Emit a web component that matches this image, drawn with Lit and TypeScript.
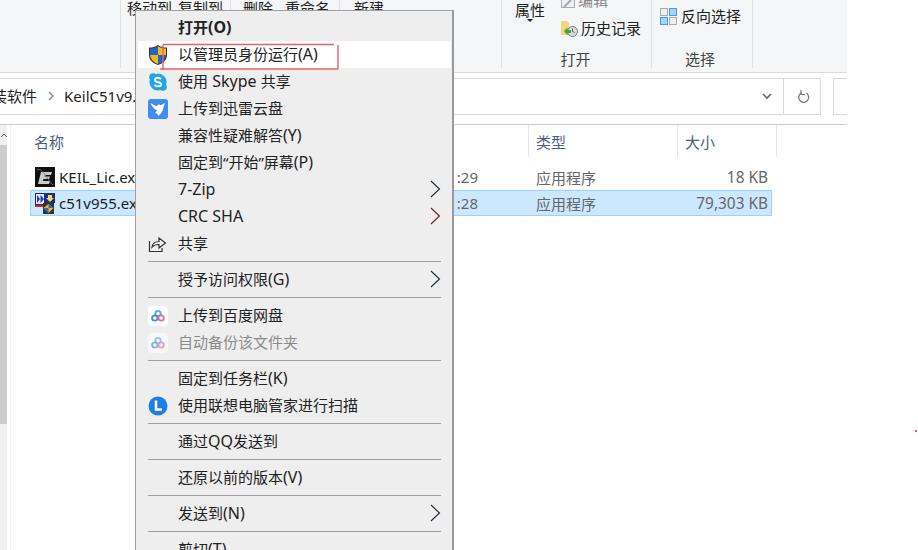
import { LitElement, html, css, TemplateResult } from "lit";
import { customElement } from "lit/decorators.js";

const arrow = (color: string) => html`<svg width="11" height="18" viewBox="0 0 11 18"><path d="M1 1l8.500 8L1 17" fill="none" stroke="${color}" stroke-width="1.1"/></svg>`;

const shield = html`<svg width="20" height="22" viewBox="0 0 20 22">
  <path d="M10 1C7.500 3 4.500 3.500 1 3.500V11c0 5 4 8.500 9 10 5-1.500 9-5 9-10V3.500C15.500 3.500 12.500 3 10 1z" fill="#333"/>
  <path d="M10 2.200V11H2V4.500c3 0 5.500-.6 8-2.300z" fill="#1d68c4"/>
  <path d="M10 2.200V11h8V4.500c-3 0-5.500-.6-8-2.300z" fill="#f6b91d"/>
  <path d="M2 11h8v9C6 18.700 2.500 15.500 2 11z" fill="#f6b91d"/>
  <path d="M18 11h-8v9c4-1.300 7.500-4.500 8-9z" fill="#1d68c4"/>
</svg>`;

const skype = html`<svg width="20" height="20" viewBox="0 0 20 20">
  <circle cx="10" cy="10" r="8.600" fill="#1fa6e6"/><circle cx="5" cy="5" r="3.800" fill="#1fa6e6"/><circle cx="15" cy="15" r="3.800" fill="#1fa6e6"/>
  <path d="M13 7.200C12.400 6.200 11.200 5.800 10 5.800c-1.700 0-3 .9-3 2.200 0 3 6.200 1.600 6.200 4.300 0 1.300-1.400 2.100-3.100 2.100-1.500 0-2.800-.6-3.400-1.800" fill="none" stroke="#fff" stroke-width="1.900"/>
</svg>`;

const xunlei = html`<svg width="20" height="20" viewBox="0 0 20 20">
  <rect width="20" height="20" rx="3" fill="#3f8cf5"/>
  <path d="M2.500 4l5.800 3.200 2.700-2 1.500 1L17 4l-1.500 4c-.3 4-2.700 7-5 9-.5-1.500-1.500-2.700-3.500-3.300l2.300-2.200C6.500 10.500 4 8 2.500 4z" fill="#fff"/>
</svg>`;

const share = html`<svg width="19" height="18" viewBox="0 0 19 18">
  <path d="M1.500 6v10.500h12.500V13" fill="none" stroke="#333" stroke-width="1.200"/>
  <path d="M4 12c.5-3.500 3-5.500 7-5.500V3l6.500 5-6.500 5V9.500c-3 0-5.500.8-7 2.500z" fill="none" stroke="#333" stroke-width="1.200"/>
</svg>`;

const baidu = html`<svg width="20" height="20" viewBox="0 0 20 20">
  <rect width="20" height="20" rx="4" fill="#fff"/>
  <circle cx="10" cy="7.500" r="2.700" fill="none" stroke="#4aa8e8" stroke-width="1.800"/>
  <circle cx="6.800" cy="12" r="2.700" fill="none" stroke="#3f8fdc" stroke-width="1.800"/>
  <circle cx="13.200" cy="12" r="2.700" fill="none" stroke="#e66f9a" stroke-width="1.800"/>
</svg>`;

const lenovo = html`<svg width="20" height="20" viewBox="0 0 20 20">
  <circle cx="10" cy="10" r="9.500" fill="#1c7fe6"/>
  <path d="M8 4.500v9h6" fill="none" stroke="#fff" stroke-width="2.600"/>
</svg>`;

const keilIcon = html`<svg width="20" height="20" viewBox="0 0 20 20">
  <rect width="20" height="20" fill="#111"/>
  <path d="M6 5h11l-1 3H10l-.5 1.500H15L14 12H8.500L8 14h7l-1 3H3z" fill="#ccc"/>
  <path d="M2 3c5-3 9 8 16 15" fill="none" stroke="#777" stroke-width="1"/>
</svg>`;

const c51Icon = html`<svg width="20" height="21" viewBox="0 0 20 21">
  <rect width="10" height="12" fill="#1a2a90"/>
  <rect x="1" y="1" width="8" height="10" fill="#dfe8ff"/>
  <path d="M2 2v8l3-4zM5.500 2v8L9 6z" fill="#2a3ab0"/>
  <rect y="12" width="9" height="2" fill="#e02020"/>
  <rect x="10" width="10" height="10" fill="#1a2a90"/>
  <path d="M13 2h4v3h2l-4 4-4-4h2z" fill="#f4e04a"/>
  <rect x="8" y="10" width="11" height="11" fill="#333"/>
  <path d="M13.500 11l5 4-5 5-5-5z" fill="#f0b820"/>
  <path d="M13.500 11v4h5zM13.500 20v-5h-5z" fill="#2b66c0"/>
</svg>`;

const historyIcon = html`<svg width="17" height="17" viewBox="0 0 17 17">
  <path d="M0 1h6l2 2v12H0z" fill="#f6d67a"/>
  <circle cx="11.500" cy="11.500" r="5" fill="#ddd" stroke="#777"/>
  <path d="M11.500 8.500v3l2 1" fill="none" stroke="#555"/>
  <path d="M3 11l3.500-3.500V10H10v3H6.500v2.500z" fill="#3da53d"/>
</svg>`;

const invertIcon = html`<svg width="17" height="17" viewBox="0 0 17 17">
  <rect x="0.500" y="0.500" width="7" height="7" fill="#eee" stroke="#aaa"/>
  <rect x="9.500" y="0.500" width="7" height="7" fill="#a6d4fa" stroke="#3d9bf0"/>
  <rect x="0.500" y="9.500" width="7" height="7" fill="#a6d4fa" stroke="#3d9bf0"/>
  <rect x="9.500" y="9.500" width="7" height="7" fill="#eee" stroke="#aaa"/>
</svg>`;

const editIcon = html`<svg width="14" height="8" viewBox="0 0 14 8">
  <rect x="0.500" y="-6" width="13" height="13.500" fill="#f0f0f0" stroke="#aab"/>
  <path d="M3 7L10 0" stroke="#9ab" stroke-width="2"/>
</svg>`;

/** Latin runs sit slightly larger than CJK text in the reference's UI font. */
const mixed = (text: string) =>
  text.split(/([\x20-\x7e]+)/).map((part, i) => (i % 2 ? html`<span class="lat">${part}</span>` : part));

interface Row { label?: string; icon?: TemplateResult; bold?: boolean; disabled?: boolean; hot?: boolean; sub?: string; sep?: boolean; }

const ROWS: Row[] = [
  { label: "打开(O)", bold: true },
  { label: "以管理员身份运行(A)", icon: shield, hot: true },
  { label: "使用 Skype 共享", icon: skype },
  { label: "上传到迅雷云盘", icon: xunlei },
  { label: "兼容性疑难解答(Y)" },
  { label: "固定到“开始”屏幕(P)" },
  { label: "7-Zip", sub: "#1a2a3a" },
  { label: "CRC SHA", sub: "#7a1a1a" },
  { label: "共享", icon: share },
  { sep: true },
  { label: "授予访问权限(G)", sub: "#1a2a3a" },
  { sep: true },
  { label: "上传到百度网盘", icon: baidu },
  { label: "自动备份该文件夹", icon: baidu, disabled: true },
  { sep: true },
  { label: "固定到任务栏(K)" },
  { label: "使用联想电脑管家进行扫描", icon: lenovo },
  { sep: true },
  { label: "通过QQ发送到" },
  { sep: true },
  { label: "还原以前的版本(V)" },
  { sep: true },
  { label: "发送到(N)", sub: "#1a2a3a" },
  { sep: true },
  { label: "剪切(T)" },
];

@customElement("app-root")
export class AppRoot extends LitElement {
  static styles = css`
    :host { display: block; width: 918px; height: 550px; overflow: hidden; position: relative; background: #fff; font-family: "Noto Sans", "Noto Sans CJK SC", sans-serif; font-size: 15px; color: #222; }
    .frame { width: 847px; display: flex; flex-direction: column; }

    .ribbon { height: 72px; background: #f5f6f7; border-bottom: 1px solid #dcdcdc; display: flex; align-items: flex-start; overflow: hidden; }
    .group { height: 68px; border-right: 1px solid #e0e0e0; display: flex; flex-direction: column; justify-content: space-between; box-sizing: border-box; flex: none; }
    .g0 { width: 121px; }
    .g1 { width: 110px; }
    .g2 { width: 109px; }
    .g3 { width: 162px; }
    .g4 { width: 150px; }
    .g5 { width: 101px; }
    .tools { display: flex; line-height: 16px; white-space: nowrap; }
    .g1 .tools { padding-left: 6px; gap: 6px; }
    .g2 .tools { padding-left: 12px; gap: 12px; }
    .g3 .tools { padding-left: 14px; }
    .glabel { height: 18px; line-height: 18px; text-align: center; color: #444; }
    .g4 .glabel { padding-right: 2px; }
    .g5 .glabel { padding-right: 4px; }
    .prop { padding-left: 13px; display: flex; flex-direction: column; align-items: center; line-height: 20px; }
    .caret { width: 0; height: 0; border: 3px solid transparent; border-top: 3px solid #222; border-bottom: 0; margin-top: -1px; }
    .opencol { margin-left: 16px; display: flex; flex-direction: column; }
    .ribrow { display: flex; align-items: center; gap: 3px; line-height: 20px; height: 20px; }
    .ribrow.clip { height: 16px; margin: -8px 0 10px; align-items: flex-end; color: #888; }
    .ribrow.clip span { line-height: 16px; }
    .select { display: flex; align-items: center; gap: 4px; padding: 6px 0 0 8px; line-height: 20px; }

    .addr { display: flex; margin-top: 5px; height: 37px; box-sizing: border-box; }
    .path { width: 785px; margin-left: -1px; flex: none; border: 1px solid #d9d9d9; box-sizing: border-box; padding-bottom: 2px; display: flex; align-items: center; white-space: nowrap; }
    .crumb { margin-left: -8px; }
    .sepchev { margin: 0 10px 0 11px; display: flex; }
    .spacer { flex: 1; }
    .chev { margin: 2px 11px 0 0; display: flex; }
    .refresh { width: 38px; flex: none; margin-left: -1px; padding-left: 2px; border: 1px solid #d9d9d9; box-sizing: border-box; display: flex; align-items: center; justify-content: center; }
    .search { flex: 1; margin-left: 12px; border: 1px solid #d9d9d9; border-right: 0; }

    .body { margin-top: 9px; border-top: 1px solid #cccccc; display: flex; height: 500px; }
    .track { width: 7px; background: #f0f0f0; flex: none; display: flex; flex-direction: column; }
    .up { height: 20px; display: flex; align-items: center; justify-content: center; }
    .thumb { height: 279px; background: #cdcdcd; }
    .pane { flex: 1; margin-left: 3px; border-left: 1px solid #f2f2f2; }
    .cols { display: grid; grid-template-columns: 518px 149px 99px; height: 32px; align-items: center; color: #4c607a; }
    .cols > div { height: 100%; display: flex; align-items: center; padding-left: 7px; border-right: 1px solid #e5e5e5; box-sizing: border-box; }
    .cols > div:first-child { padding-left: 23px; }
    .list { padding-top: 7px; }
    .file { display: grid; grid-template-columns: 20px 1fr 52px 60px 233px; align-items: center; height: 26px; margin-left: 19px; width: 742px; box-sizing: border-box; border: 1px solid transparent; padding-left: 4px; color: #666; }
    .file.sel { background: #cce8ff; border-color: #99d1ff; }
    .fname { color: #222; padding-left: 4px; white-space: nowrap; }
    .ftime { text-align: right; }
    .ftype { padding-left: 58px; white-space: nowrap; }
    .fsize { text-align: right; padding-right: 3px; font-size: 15.4px; }
    .ficon { display: flex; }

    .menu { position: absolute; left: 135px; top: 10px; width: 319px; background: #eeeeee; border: 1px solid #a0a0a0; border-right: 2px solid #9a9a9a; box-sizing: border-box; padding: 3px 1px 0 2px; height: 560px; }
    .row { display: flex; align-items: center; height: 27px; padding: 0 10px; }
    .row.hot { background: #fff; }
    .icon { width: 30px; flex: none; display: flex; align-items: center; }
    .label { flex: 1; line-height: 27px; white-space: nowrap; color: #222; }
    .lat { font-size: 16px; }
    .bold { font-weight: 700; }
    .disabled { color: #8b8b8b; }
    .dim { opacity: 0.6; display: flex; }
    .end { display: flex; align-items: center; margin-bottom: 2px; }
    .msep { height: 9px; display: flex; align-items: center; padding: 0 10px; }
    .msep div { height: 1px; width: 100%; background: #a0a0a0; }

    .mark { position: absolute; left: 0; top: 0; pointer-events: none; }
    .dot { position: absolute; left: 915px; top: 430px; width: 2px; height: 2px; background: #f0507a; }
  `;

  row(r: Row) {
    if (r.sep) return html`<div class="msep"><div></div></div>`;
    return html`<div class="row ${r.hot ? "hot" : ""}">
      <div class="icon">${r.disabled ? html`<span class="dim">${r.icon}</span>` : r.icon}</div>
      <div class="label ${r.bold ? "bold" : ""} ${r.disabled ? "disabled" : ""}">${mixed(r.label ?? "")}</div>
      <div class="end">${r.sub ? arrow(r.sub) : ""}</div>
    </div>`;
  }

  render() {
    return html`
      <div class="frame">
        <div class="ribbon">
          <div class="group g0"></div>
          <div class="group g1"><div class="tools"><span>移动到</span><span>复制到</span></div></div>
          <div class="group g2"><div class="tools"><span>删除</span><span>重命名</span></div></div>
          <div class="group g3"><div class="tools"><span>新建</span></div></div>
          <div class="group g4">
            <div class="tools">
              <div class="prop"><span>属性</span><div class="caret"></div></div>
              <div class="opencol">
                <div class="ribrow clip">${editIcon}<span>编辑</span></div>
                <div class="ribrow">${historyIcon}<span>历史记录</span></div>
              </div>
            </div>
            <div class="glabel">打开</div>
          </div>
          <div class="group g5">
            <div class="select">${invertIcon}<span>反向选择</span></div>
            <div class="glabel">选择</div>
          </div>
        </div>

        <div class="addr">
          <div class="path">
            <span class="crumb">装软件</span>
            <span class="sepchev"><svg width="6" height="10" viewBox="0 0 6 10"><path d="M1 1l4 4-4 4" fill="none" stroke="#8a8a8a" stroke-width="1.4"/></svg></span>
            <span>KeilC51v9.55</span>
            <span class="spacer"></span>
            <span class="chev"><svg width="10" height="7" viewBox="0 0 10 7"><path d="M1 1l4 4 4-4" fill="none" stroke="#666" stroke-width="1.6"/></svg></span>
          </div>
          <div class="refresh"><svg width="13" height="14" viewBox="0 0 13 14"><path d="M9.500 3.200a5 5 0 1 1-5-.4" fill="none" stroke="#777" stroke-width="1.300"/><path d="M4 0v4.500h4" fill="none" stroke="#777" stroke-width="1.200"/></svg></div>
          <div class="search"></div>
        </div>

        <div class="body">
          <div class="track">
            <div class="up"><svg width="6" height="4" viewBox="0 0 6 4"><path d="M0 4l3-3 3 3" fill="none" stroke="#555"/></svg></div>
            <div class="thumb"></div>
          </div>
          <div class="pane">
            <div class="cols"><div>名称</div><div>类型</div><div>大小</div></div>
            <div class="list">
              <div class="file">
                <span class="ficon">${keilIcon}</span><span class="fname">KEIL_Lic.exe</span><span class="ftime">:29</span><span class="ftype">应用程序</span><span class="fsize">18 KB</span>
              </div>
              <div class="file sel">
                <span class="ficon">${c51Icon}</span><span class="fname">c51v955.exe</span><span class="ftime">:28</span><span class="ftype">应用程序</span><span class="fsize">79,303 KB</span>
              </div>
            </div>
          </div>
        </div>
      </div>

      <div class="menu">${ROWS.map((r) => this.row(r))}</div>

      <svg class="mark" width="918" height="550" viewBox="0 0 918 550">
        <g stroke="#e8606a" stroke-width="1.4" fill="none">
          <path d="M163 44.500H334"/>
          <path d="M338 45V69"/>
          <path d="M160 69H338"/>
          <path d="M163 45V70"/>
        </g>
      </svg>
      <div class="dot"></div>
    `;
  }
}
